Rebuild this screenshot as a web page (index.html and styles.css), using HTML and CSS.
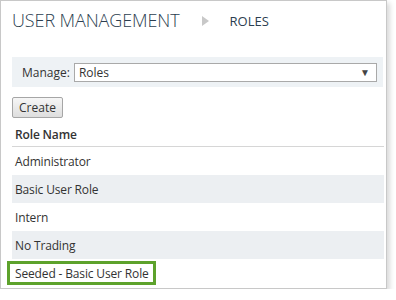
FILE: index.html
```html
<!DOCTYPE html>
<html lang="en">
<head>
    <meta charset="UTF-8">
    <title>User Management - Roles</title>
    <link rel="stylesheet" href="styles.css">
</head>
<body>
    <div class="panel">
        <div class="crumbs">
            <h1>USER MANAGEMENT</h1>
            <span class="sep"></span>
            <span class="current">ROLES</span>
        </div>

        <div class="manage-bar">
            <label for="manage">Manage:</label>
            <div class="select">
                <span>Roles</span>
                <span class="caret">&#9660;</span>
            </div>
        </div>

        <button class="create-btn">Create</button>

        <table class="roles">
            <thead>
                <tr><th>Role Name</th></tr>
            </thead>
            <tbody>
                <tr><td>Administrator</td></tr>
                <tr class="alt"><td>Basic User Role</td></tr>
                <tr><td>Intern</td></tr>
                <tr class="alt"><td>No Trading</td></tr>
                <tr><td><span class="highlight">Seeded - Basic User Role</span></td></tr>
            </tbody>
        </table>
    </div>
</body>
</html>
```

FILE: styles.css
```css
body {
    margin: 0;
    background: white;
    font-family: 'Open Sans', sans-serif;
    color: #333;
}

.panel {
    width: 385px;
    height: 287px;
    border: 1px solid #c8c8c8;
    box-shadow: 3px 3px 5px rgba(0, 0, 0, 0.15);
}

.crumbs {
    display: flex;
    align-items: center;
    height: 38px;
    padding-left: 11px;
    color: #2c3e50;
}

.crumbs h1 {
    margin: 0;
    font-size: 18px;
    font-weight: 300;
    letter-spacing: -0.1px;
}

.sep {
    width: 0;
    height: 0;
    border-top: 5px solid transparent;
    border-bottom: 5px solid transparent;
    border-left: 7px solid #c8c8c8;
    margin: 1px 21px 0 22px;
}

.current {
    font-size: 13px;
    margin-top: 2px;
}

.manage-bar {
    display: flex;
    align-items: center;
    margin: 18px 3px 0 11px;
    height: 30px;
    background: #eef2f5;
    padding-left: 10px;
    font-size: 12px;
}

.manage-bar label {
    margin-right: 4px;
}

.select {
    display: flex;
    justify-content: space-between;
    align-items: center;
    width: 297px;
    height: 17px;
    border: 1px solid #a9a9a9;
    background: white;
    padding: 0 0 0 4px;
}

.caret {
    font-size: 10px;
    color: #444;
    margin-right: 6px;
}

.create-btn {
    display: block;
    margin: 10px 0 0 11px;
    height: 21px;
    width: 51px;
    padding: 0;
    font-family: 'Open Sans', sans-serif;
    font-size: 12px;
    color: #333;
    background: linear-gradient(#f6f6f6, #dedede);
    border: 1px solid #a6a6a6;
    border-radius: 2px;
}

.roles {
    margin: 0 3px 0 11px;
    width: 372px;
    border-collapse: collapse;
    font-size: 12px;
    letter-spacing: -0.15px;
}

.roles th {
    text-align: left;
    font-weight: 600;
    height: 24px;
    padding: 4px 0 0 3px;
    border-bottom: 1px solid #d6d6d6;
}

.roles td {
    height: 28px;
    padding: 0 0 0 3px;
}

.roles tr.alt td {
    background: #eceff2;
}

.highlight {
    display: inline-block;
    margin-left: -8px;
    padding: 1px 4px 0 5px;
    line-height: 17px;
    border: 3px solid #5da22c;
}
```
